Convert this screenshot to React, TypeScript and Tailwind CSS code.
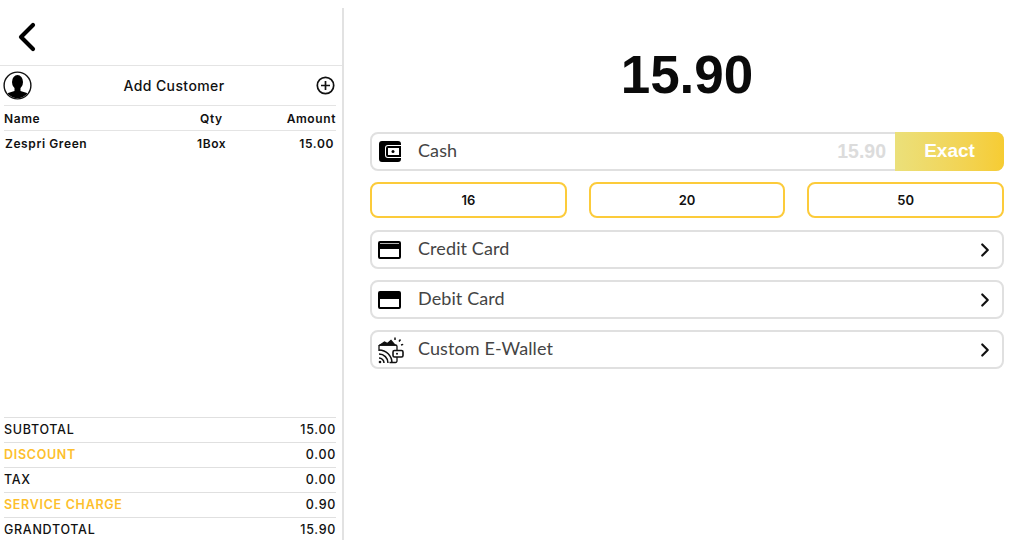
import { ChevronRight, ChevronLeft } from "lucide-react";

const items = [{ name: "Zespri Green", qty: "1Box", amount: "15.00" }];

const totals = [
  { label: "SUBTOTAL", value: "15.00" },
  { label: "DISCOUNT", value: "0.00", accent: true },
  { label: "TAX", value: "0.00" },
  { label: "SERVICE CHARGE", value: "0.90", accent: true },
  { label: "GRANDTOTAL", value: "15.90" },
];

function CustomerIcon() {
  return (
    <svg width="29" height="29" viewBox="0 0 29 29">
      <defs>
        <clipPath id="avatar">
          <circle cx="14.5" cy="14.5" r="12.6" />
        </clipPath>
      </defs>
      <circle cx="14.5" cy="14.5" r="13.4" fill="white" stroke="#111" strokeWidth="1.4" />
      <g clipPath="url(#avatar)" fill="#000">
        <ellipse cx="14.5" cy="11" rx="5.500" ry="7" />
        <path d="M11.500 16h6v4l6.500 2 3 7H2l3-7 6.500-2z" />
      </g>
    </svg>
  );
}

function AddIcon() {
  return (
    <svg width="19" height="19" viewBox="0 0 19 19" fill="none" stroke="#111" strokeWidth="1.7">
      <circle cx="9.500" cy="9.500" r="8.200" />
      <path d="M9.500 5v9M5 9.500h9" />
    </svg>
  );
}

function WalletIcon() {
  return (
    <svg width="22" height="21" viewBox="0 0 22 21">
      <path d="M3 0h16a3 3 0 0 1 3 3v1H9a3 3 0 0 0-3 3v7a3 3 0 0 0 3 3h13v1a3 3 0 0 1-3 3H3a3 3 0 0 1-3-3V3a3 3 0 0 1 3-3z" fill="#000" />
      <path d="M9 5h13v11H9a2 2 0 0 1-2-2V7a2 2 0 0 1 2-2zM9 7v7h11V7z" fillRule="evenodd" fill="#000" />
      <circle cx="14" cy="10.500" r="1.500" fill="#000" />
    </svg>
  );
}

function CardIcon({ thick }: { thick?: boolean }) {
  return (
    <svg width="23" height="18" viewBox="0 0 23 18">
      <path
        fillRule="evenodd"
        d="M2 0h19a2 2 0 0 1 2 2v14a2 2 0 0 1-2 2H2a2 2 0 0 1-2-2V2a2 2 0 0 1 2-2zM2 8v8h19V8z"
        fill="#000"
      />
      {thick ? null : <rect x="2" y="2" width="19" height="1" fill="#fff" opacity="0.7" />}
    </svg>
  );
}

function EWalletIcon() {
  return (
    <svg width="26" height="28" viewBox="0 0 26 28" fill="none" stroke="#111" strokeWidth="1.300">
      <path d="M1 15v-4.500A1.500 1.500 0 0 1 2.500 9h15a1.500 1.500 0 0 1 1.500 1.500V14" />
      <path d="M2 9l4.500-3 3 1.500 3.500-3 4 4.500z" fill="#111" />
      <path d="M11.500 26.500h6a1.500 1.500 0 0 0 1.500-1.500v-4" />
      <rect x="15" y="14.500" width="10" height="6.500" rx="1.500" strokeWidth="1.600" />
      <circle cx="19" cy="17.700" r="1" fill="#111" stroke="none" />
      <path d="M1 14a13 13 0 0 1 13 13M1 18a9 9 0 0 1 9 9M1 22a5 5 0 0 1 5 5" strokeWidth="1.500" />
      <circle cx="2" cy="26" r="1.300" fill="#111" stroke="none" />
      <path d="M17 4V1.500M21 5.500l1.500-2M23 9l2.200-.6" strokeWidth="1.500" />
    </svg>
  );
}

function PayRow({ icon, label }: { icon: React.ReactNode; label: string }) {
  return (
    <div className="flex h-[39px] items-center rounded-lg border-2 border-[#e0e0e0] bg-white pr-[6px]">
      <div className="flex w-[46px] shrink-0 pl-[6px]">{icon}</div>
      <span className="flex-1 pb-[3px] font-['Lato',sans-serif] text-[18px] leading-none tracking-[0.1px] text-[#444]">{label}</span>
      <ChevronRight size={22} strokeWidth={2.4} color="#111" />
    </div>
  );
}

export default function App() {
  return (
    <div className="flex h-[540px] w-[1024px] overflow-hidden bg-white pt-2 font-['Liberation_Sans',sans-serif] text-[#111]">
      <aside className="flex h-[534px] w-[344px] shrink-0 flex-col overflow-hidden border-r-2 border-[#e2e2e2] font-['Inter',sans-serif]">
        <div className="flex h-[58px] shrink-0 items-center border-b border-[#e4e4e4] pl-[3px]">
          <ChevronLeft size={48} strokeWidth={2.1} color="#000" />
        </div>

        <div className="flex h-[39px] shrink-0 items-center pl-[3px] pr-[7px]">
          <CustomerIcon />
          <span className="flex-1 text-center text-[14px] font-medium tracking-[0.4px]">Add Customer</span>
          <div className="pb-[1px]">
            <AddIcon />
          </div>
        </div>

        <div className="ml-1 mr-[6px] flex min-h-0 flex-1 flex-col text-[12px] font-semibold tracking-[0.6px]">
          <div className="flex h-[26px] shrink-0 items-center border-y border-[#e4e4e4] pt-[1px]">
            <span className="w-[196px]">Name</span>
            <span className="w-[60px]">Qty</span>
            <span className="flex-1 text-right">Amount</span>
          </div>
          {items.map((item) => (
            <div key={item.name} className="flex h-[25px] shrink-0 items-center pl-[1px]">
              <span className="w-[192px]">{item.name}</span>
              <span className="w-[60px]">{item.qty}</span>
              <span className="flex-1 pr-[2px] text-right">{item.amount}</span>
            </div>
          ))}
        </div>

        <div className="ml-1 mr-[6px] shrink-0 text-[12.5px] font-medium tracking-[0.7px]">
          {totals.map((row) => (
            <div key={row.label} className="flex h-[25px] items-center justify-between border-t border-[#e0e0e0] pt-[1px]">
              <span className={row.accent ? "font-semibold text-[#fdbf2d]" : ""}>{row.label}</span>
              <span>{row.value}</span>
            </div>
          ))}
        </div>
      </aside>

      <main className="flex-1 pl-[26px] pr-5">
        <div className="flex h-[124px] items-start justify-center pt-[34px] text-[53px] font-bold leading-[66px] text-[#0a0a0a]">
          15.90
        </div>

        <div className="flex h-[39px] items-center rounded-lg border-2 border-[#e0e0e0]">
          <div className="flex w-[46px] shrink-0 pl-[7px]">
            <WalletIcon />
          </div>
          <span className="flex-1 pb-[3px] font-['Lato',sans-serif] text-[18px] leading-none tracking-[0.1px] text-[#444]">Cash</span>
          <span className="pr-[9px] text-[19.5px] font-bold text-[#dcdcdc]">15.90</span>
          <div className="-my-[2px] -mr-[2px] flex h-[39px] w-[109px] items-center justify-center rounded-r-lg bg-gradient-to-r from-[#ebe07a] to-[#f6cc32] text-[19px] font-bold text-white">
            Exact
          </div>
        </div>

        <div className="mt-[11px] grid grid-cols-3 gap-[22px]">
          {["16", "20", "50"].map((amount) => (
            <button key={amount} className="h-[36px] rounded-lg border-2 border-[#fccb3a] bg-white pt-[1px] font-['Inter',sans-serif] text-[13px] font-semibold text-[#111]">
              {amount}
            </button>
          ))}
        </div>

        <div className="mt-3 flex flex-col gap-[11px]">
          <PayRow icon={<CardIcon />} label="Credit Card" />
          <PayRow icon={<CardIcon thick />} label="Debit Card" />
          <PayRow icon={<EWalletIcon />} label="Custom E-Wallet" />
        </div>
      </main>
    </div>
  );
}
